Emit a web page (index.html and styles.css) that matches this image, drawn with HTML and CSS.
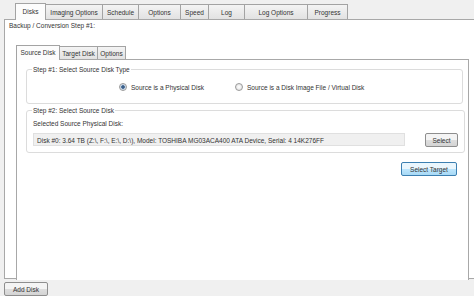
FILE: index.html
```html
<!DOCTYPE html>
<html>
<head>
    <title>Disk Backup</title>
    <link rel="stylesheet" href="styles.css">
</head>
<body>
    <div class="window">
        <div class="tabs top-tabs">
            <div class="tab active">Disks</div>
            <div class="tab">Imaging Options</div>
            <div class="tab">Schedule</div>
            <div class="tab">Options</div>
            <div class="tab">Speed</div>
            <div class="tab">Log</div>
            <div class="tab">Log Options</div>
            <div class="tab">Progress</div>
        </div>

        <div class="panel outer-panel">
            <div class="step-label">Backup / Conversion Step #1:</div>

            <div class="tabs inner-tabs">
                <div class="tab active">Source Disk</div>
                <div class="tab">Target Disk</div>
                <div class="tab">Options</div>
            </div>

            <div class="panel inner-panel">
                <fieldset class="group group-type">
                    <legend>Step #1: Select Source Disk Type</legend>
                    <div class="radio-row">
                        <label class="radio"><span class="dot checked"></span>Source is a Physical Disk</label>
                        <label class="radio"><span class="dot"></span>Source is a Disk Image File / Virtual Disk</label>
                    </div>
                </fieldset>

                <fieldset class="group group-disk">
                    <legend>Step #2: Select Source Disk</legend>
                    <div class="field-label">Selected Source Physical Disk:</div>
                    <div class="disk-row">
                        <div class="disk-box">Disk #0: 3.64 TB (Z:\, F:\, E:\, D:\), Model: TOSHIBA MG03ACA400 ATA Device, Serial: 4 14K276FF</div>
                        <button class="btn">Select</button>
                    </div>
                </fieldset>

                <div class="target-row">
                    <button class="btn btn-default">Select Target</button>
                </div>
            </div>
        </div>

        <div class="footer">
            <button class="btn add-btn">Add Disk</button>
        </div>
    </div>
</body>
</html>
```

FILE: styles.css
```css
body {
    margin: 0;
    background-color: #f0f0f0;
    font-family: "Liberation Sans", Arial, sans-serif;
    font-size: 6.5px;
    color: #333;
    overflow: hidden;
}

.window {
    width: 474px;
    height: 296px;
    overflow: hidden;
}

.tabs {
    display: flex;
    align-items: flex-end;
}

.top-tabs {
    height: 19px;
    padding-left: 15px;
}

.tab {
    height: 15px;
    line-height: 15px;
    text-align: center;
    border: 1px solid #a3a3a3;
    border-bottom: none;
    margin-right: -1px;
    background: linear-gradient(#f4f4f4, #e2e2e2);
    box-sizing: border-box;
}

.tab.active {
    height: 17px;
    background: #fcfcfc;
    position: relative;
    z-index: 1;
    margin-bottom: -1px;
}

.top-tabs .tab:nth-child(1) { width: 31px; }
.top-tabs .tab:nth-child(2) { width: 58px; }
.top-tabs .tab:nth-child(3) { width: 37px; }
.top-tabs .tab:nth-child(4) { width: 43px; }
.top-tabs .tab:nth-child(5) { width: 29px; }
.top-tabs .tab:nth-child(6) { width: 37px; }
.top-tabs .tab:nth-child(7) { width: 64px; }
.top-tabs .tab:nth-child(8) { width: 41px; }

.panel {
    background-color: #fff;
    border: 1px solid #a8a8a8;
    box-sizing: border-box;
}

.outer-panel {
    margin-left: 4px;
    width: 480px;
    height: 260px;
    border-right: none;
    padding-left: 11px;
}

.step-label {
    margin-left: -7px;
    padding-top: 2px;
    height: 21px;
}

.inner-tabs {
    height: 16px;
}

.inner-tabs .tab {
    height: 13px;
    line-height: 13px;
}

.inner-tabs .tab.active {
    height: 15px;
}

.inner-tabs .tab:nth-child(1) { width: 44px; }
.inner-tabs .tab:nth-child(2) { width: 39px; }
.inner-tabs .tab:nth-child(3) { width: 29px; }

.inner-panel {
    width: 453px;
    height: 221px;
    border-bottom: none;
    padding: 6px 5px 0 9px;
}

.group {
    margin: 0;
    padding: 0 6px;
    border: 1px solid #dcdcdc;
    border-radius: 3px;
}

.group legend {
    padding: 0 1px;
    margin-left: -1px;
}

.group-type {
    height: 36px;
}

.radio-row {
    display: flex;
    padding: 10px 0 0 86px;
    gap: 31px;
}

.radio {
    display: flex;
    align-items: center;
    gap: 4px;
}

.dot {
    width: 6px;
    height: 6px;
    border: 1px solid #9a9a9a;
    border-radius: 50%;
    background: radial-gradient(#fff, #dcdcdc);
}

.dot.checked {
    background: radial-gradient(#3a5f8a 35%, #b9cde3 45%, #e8eef5 80%);
}

.group-disk {
    margin-top: 3px;
    height: 44px;
}

.field-label {
    padding-top: 6px;
    height: 11px;
}

.disk-row {
    display: flex;
    align-items: center;
}

.disk-box {
    width: 372px;
    height: 13px;
    line-height: 13px;
    padding-left: 3px;
    background-color: #f0f0f0;
    border: 1px solid #e0e0e0;
    box-sizing: border-box;
    white-space: nowrap;
}

.btn {
    font-family: "Liberation Sans", Arial, sans-serif;
    font-size: 6.5px;
    color: #333;
    height: 14px;
    padding: 0;
    border: 1px solid #8e8e8e;
    border-radius: 2px;
    background: linear-gradient(#f4f4f4 50%, #dedede 50%, #d4d4d4);
}

.disk-row .btn {
    width: 33px;
    margin-left: 20px;
    margin-top: 2px;
}

.target-row {
    display: flex;
    justify-content: flex-end;
    padding-top: 9px;
    padding-right: 6px;
}

.btn-default {
    width: 56px;
    border-color: #3c7fb1;
    background: linear-gradient(#eaf6fd 50%, #bee6fd 50%, #a7d9f5);
}

.footer {
    padding: 3px 0 0 4px;
}

.add-btn {
    width: 44px;
}
```
